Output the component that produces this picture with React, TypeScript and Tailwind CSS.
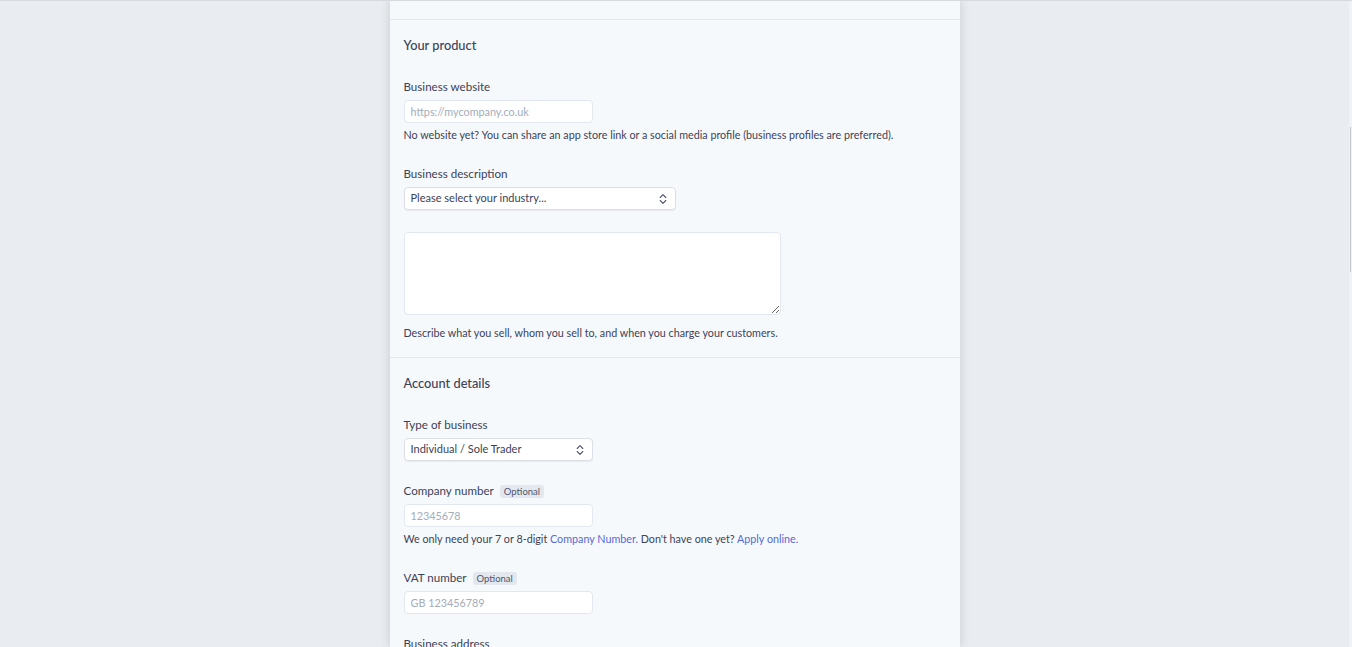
import React from "react";

const font = { fontFamily: 'Lato, "Noto Sans", sans-serif' };

function Chevrons() {
  return (
    <svg width="8" height="12" viewBox="0 0 8 12" fill="none" className="text-[#4f566b]">
      <path d="M1.2 4.5L4 1.7L6.8 4.5" stroke="currentColor" strokeWidth="1.1" strokeLinecap="round" strokeLinejoin="round" />
      <path d="M1.2 7.5L4 10.3L6.8 7.5" stroke="currentColor" strokeWidth="1.1" strokeLinecap="round" strokeLinejoin="round" />
    </svg>
  );
}

function Label({ children, optional }: { children: React.ReactNode; optional?: boolean }) {
  return (
    <div className="flex items-center h-4 text-[11.6px] leading-4 text-[#3c4257]">
      <span>{children}</span>
      {optional && (
        <span className="ml-[6px] h-[13px] px-[4px] rounded-[3px] bg-[#e3e8ee] text-[9.5px] leading-[13px] text-[#4f566b]">
          Optional
        </span>
      )}
    </div>
  );
}

function TextInput({ placeholder }: { placeholder: string }) {
  return (
    <input
      type="text"
      placeholder={placeholder}
      className="mt-[5px] block w-[189px] h-[23px] rounded-[4px] border border-[#e3e8ee] bg-white px-[6px] text-[10.8px] text-[#3c4257] placeholder:text-[#a3acb9] outline-none"
      style={font}
    />
  );
}

function Select({ value, width }: { value: string; width: string }) {
  return (
    <div
      className={`mt-[5px] flex items-center justify-between h-[23px] ${width} rounded-[4px] border border-[#dcdfe6] bg-white pl-[6px] pr-[8px] shadow-[0_1px_1px_rgba(0,0,0,0.06)] text-[11px] text-[#3c4257]`}
    >
      <span>{value}</span>
      <Chevrons />
    </div>
  );
}

function Helper({ children, className = "" }: { children: React.ReactNode; className?: string }) {
  return <p className={`text-[10.75px] leading-4 whitespace-nowrap text-[#3c4257] ${className}`}>{children}</p>;
}

function Heading({ children }: { children: React.ReactNode }) {
  return <h2 className="h-4 text-[12.8px] leading-4 font-medium text-[#3c4257]">{children}</h2>;
}

export default function App() {
  return (
    <div className="h-[647px] overflow-hidden bg-[#e9ecf0] border-t border-[#d6d9de] flex" style={font}>
      <div className="flex-1 flex justify-center">
        <div className="w-[570px] bg-[#f6f9fc] shadow-[0_0_10px_rgba(0,0,0,0.14)]">
          {/* tail of previous section */}
          <div className="h-[18px]" />

          {/* Your product */}
          <section className="border-t border-[#e3e8ee] px-[14px] pt-[17px] pb-[16px]">
            <Heading>Your product</Heading>

            <div className="mt-[26px]">
              <Label>Business website</Label>
              <TextInput placeholder="https://mycompany.co.uk" />
              <Helper className="mt-[4px]">
                No website yet? You can share an app store link or a social media profile (business profiles are preferred).
              </Helper>
            </div>

            <div className="mt-[23px]">
              <Label>Business description</Label>
              <Select value="Please select your industry..." width="w-[272px]" />
              <textarea
                className="mt-[22px] block w-[377px] h-[83px] rounded-[4px] border border-[#e3e8ee] bg-white outline-none resize"
              />
              <Helper className="mt-[10px]">
                Describe what you sell, whom you sell to, and when you charge your customers.
              </Helper>
            </div>
          </section>

          {/* Account details */}
          <section className="border-t border-[#e3e8ee] px-[14px] pt-[17px]">
            <Heading>Account details</Heading>

            <div className="mt-[26px]">
              <Label>Type of business</Label>
              <Select value="Individual / Sole Trader" width="w-[189px]" />
            </div>

            <div className="mt-[22px]">
              <Label optional>Company number</Label>
              <TextInput placeholder="12345678" />
              <Helper className="mt-[4px]">
                We only need your 7 or 8-digit <span className="text-[#5469d4]">Company Number.</span> Don't have one yet?{" "}
                <span className="text-[#5469d4]">Apply online.</span>
              </Helper>
            </div>

            <div className="mt-[23px]">
              <Label optional>VAT number</Label>
              <TextInput placeholder="GB 123456789" />
            </div>

            <div className="mt-[22px]">
              <Label>Business address</Label>
              <TextInput placeholder="" />
            </div>
          </section>
        </div>
      </div>

      {/* scrollbar */}
      <div className="w-[3px] bg-[#f1f2f4] flex flex-col">
        <div className="h-[126px]" />
        <div className="ml-[1px] w-[1px] h-[145px] bg-[#c1c4c9]" />
      </div>
    </div>
  );
}
